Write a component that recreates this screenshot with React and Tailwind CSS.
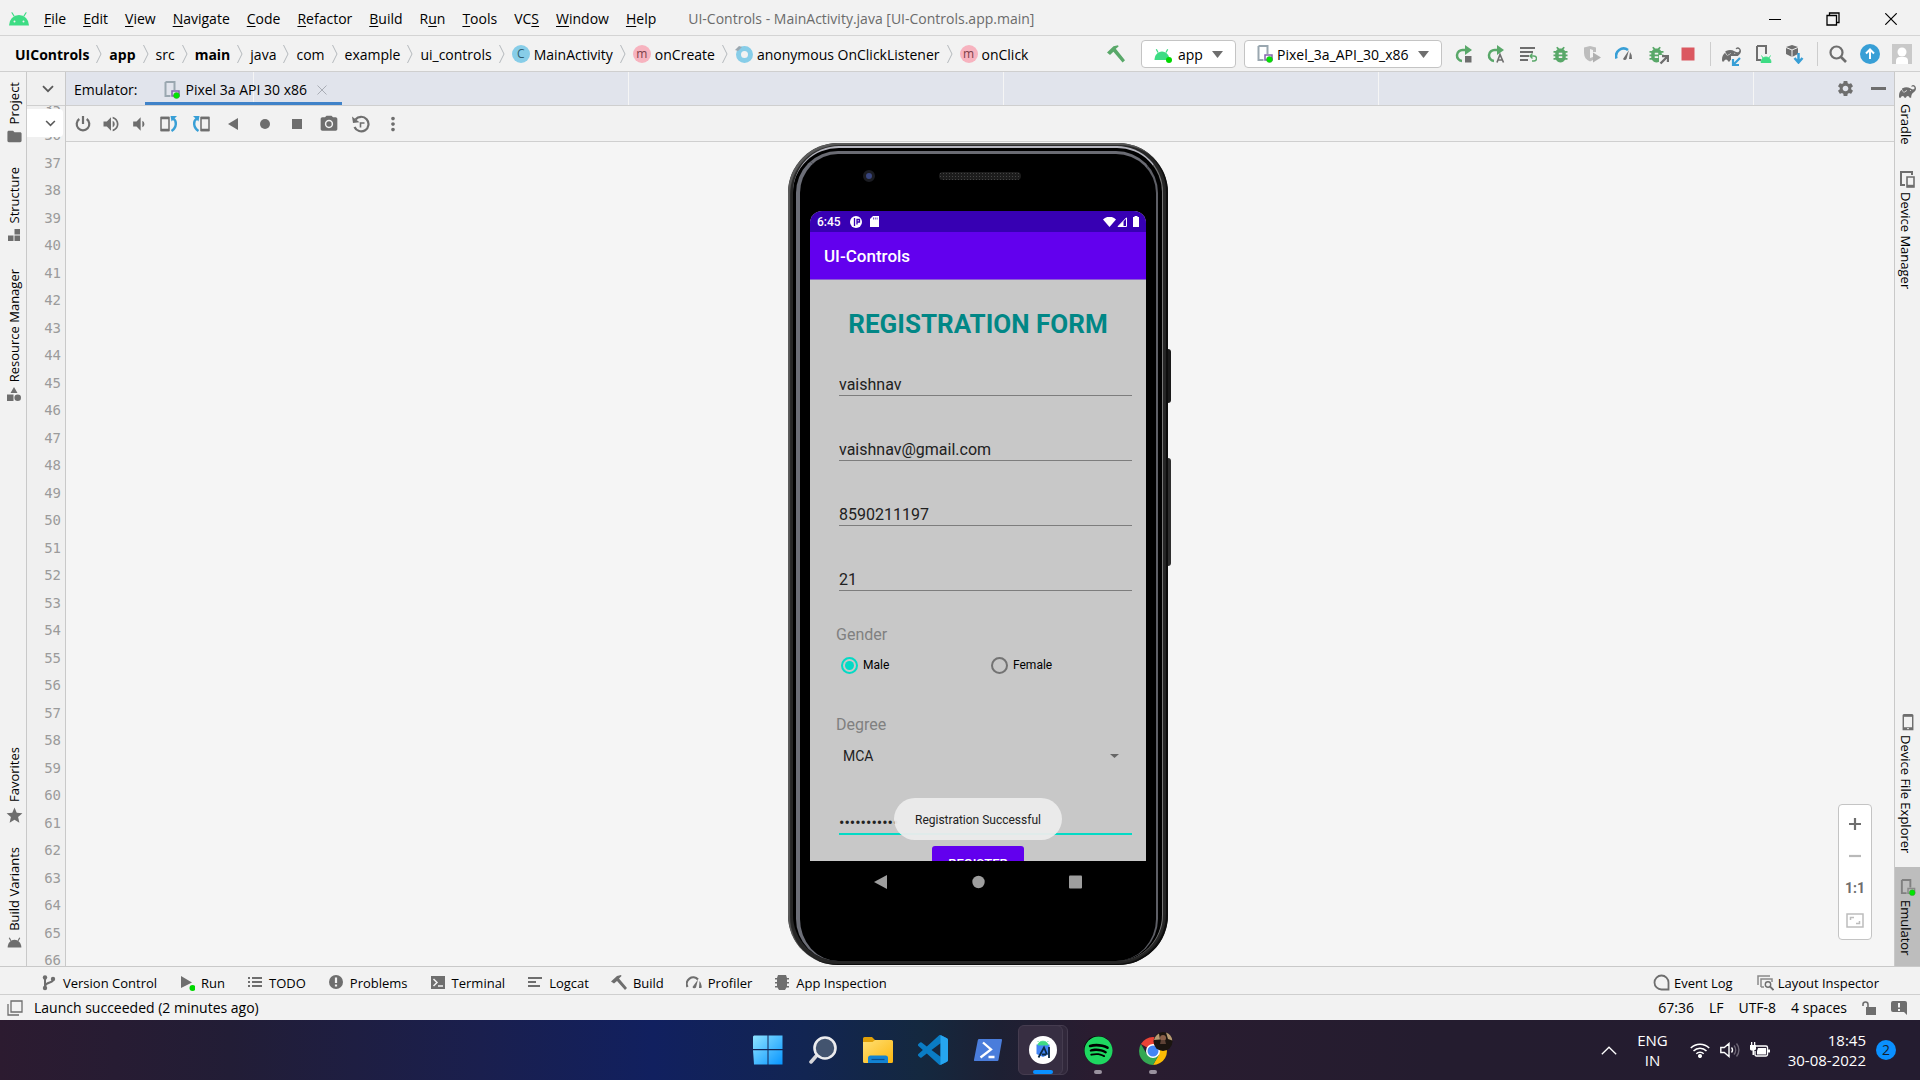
import React from "react";
import {
  MdVolumeUp,
  MdVolumeDown,
  MdCameraAlt,
  MdMoreVert,
  MdSettings,
  MdBugReport,
  MdFolder,
  MdStar,
} from "react-icons/md";
import { SiGradle } from "react-icons/si";
import { FaSpotify } from "react-icons/fa";

/* ---------- shared icons ---------- */

function AndroidHead({ className }) {
  return (
    <svg viewBox="0 0 20 14" className={className} aria-hidden="true">
      <path d="M5 4 3 .8M15 4l2-3.200" stroke="currentColor" strokeWidth="1.200" strokeLinecap="round" />
      <path d="M0 13.500a10 10.500 0 0 1 20 0z" fill="currentColor" />
      <circle cx="5.500" cy="9.500" r="1" fill="#f2f2f2" />
      <circle cx="14.500" cy="9.500" r="1" fill="#f2f2f2" />
    </svg>
  );
}

function AndroidSolid({ className }) {
  return (
    <svg viewBox="0 0 16 12" className={className} aria-hidden="true">
      <path d="M4 4 2.300.8M12 4 13.700.8" stroke="currentColor" strokeWidth="1.300" />
      <path d="M.5 11.500C.5 6.500 4 3 8 3s7.500 3.500 7.500 8.500z" fill="currentColor" />
    </svg>
  );
}

function Hammer({ className }) {
  return (
    <svg viewBox="0 0 18 18" className={className} aria-hidden="true">
      <path d="M0 7.500 6.500 1.200 11 .2l.6 1.200-2.800 2.400L18 15.200 15.600 17.600 6.400 6.800 3 10z" fill="currentColor" />
    </svg>
  );
}

function PhoneRunning({ className, chip = "#8464ad", body = "#9aa7b0" }) {
  return (
    <svg viewBox="0 0 16 18" className={className} aria-hidden="true">
      <path d="M1.500 1h9v8M1.500 1v14h5" fill="none" stroke={body} strokeWidth="2" />
      <path d="M8 10h7v5H8z" fill="none" stroke={chip} strokeWidth="1.500" />
      <circle cx="12.500" cy="14.500" r="3" fill="#00e600" stroke="#3a9a3a" strokeWidth=".5" />
    </svg>
  );
}

function PlainPhone({ className }) {
  return (
    <svg viewBox="0 0 12 18" className={className} aria-hidden="true">
      <path d="M1 1.500h10v15H1z" fill="none" stroke="currentColor" strokeWidth="1.500" />
      <path d="M1 1.500h10M1 15.500h10" stroke="currentColor" strokeWidth="3" />
      <path d="M5 15.500h2" stroke="#f2f2f2" strokeWidth="1" />
    </svg>
  );
}

function Caret({ className }) {
  return (
    <svg viewBox="0 0 10 7" preserveAspectRatio="none" className={className} aria-hidden="true">
      <path d="M0 0h10L5 7z" fill="currentColor" />
    </svg>
  );
}

function ChevronDown({ className }) {
  return (
    <svg viewBox="0 0 12 8" className={className} aria-hidden="true">
      <path d="m1 1.200 5 5 5-5" fill="none" stroke="currentColor" strokeWidth="1.800" />
    </svg>
  );
}

/* ---------- title bar ---------- */

const MENUS = [
  ["", "F", "ile"],
  ["", "E", "dit"],
  ["", "V", "iew"],
  ["", "N", "avigate"],
  ["", "C", "ode"],
  ["", "R", "efactor"],
  ["", "B", "uild"],
  ["R", "u", "n"],
  ["", "T", "ools"],
  ["VC", "S", ""],
  ["", "W", "indow"],
  ["", "H", "elp"],
];

function TitleBar() {
  return (
    <header className="flex h-9 shrink-0 items-center border-b border-[#d4d4d4] pl-[9px] pt-0.5">
      <AndroidHead className="mr-[15px] h-[14px] w-5 text-[#3ddc84]" />
      <nav aria-label="Main menu" className="flex gap-[17px]">
        {MENUS.map(([pre, key, post]) => (
          <button key={pre + key + post} type="button" className="leading-5">
            {pre}
            <span className="underline underline-offset-2">{key}</span>
            {post}
          </button>
        ))}
      </nav>
      <h1 className="ml-8 text-[#6b6b6b]">UI-Controls - MainActivity.java [UI-Controls.app.main]</h1>
      <div className="ml-auto flex *:grid *:h-8 *:w-[58px] *:place-items-center">
        <button type="button" aria-label="Minimize">
          <svg viewBox="0 0 12 12" className="size-3"><path d="M0 6.500h12" stroke="#000" /></svg>
        </button>
        <button type="button" aria-label="Restore">
          <svg viewBox="0 0 14 14" className="size-[14px]">
            <path d="M1 3.500h9.500V13H1zM3.500 3.500V1H13v9.500h-2.500" fill="none" stroke="#000" strokeWidth="1.300" />
          </svg>
        </button>
        <button type="button" aria-label="Close">
          <svg viewBox="0 0 12 12" className="size-3"><path d="m.3.3 11.400 11.400M11.700.3.3 11.700" stroke="#000" strokeWidth="1.200" /></svg>
        </button>
      </div>
    </header>
  );
}

/* ---------- navigation bar ---------- */

const CRUMBS = [
  { text: "UIControls", bold: true },
  { text: "app", bold: true },
  { text: "src" },
  { text: "main", bold: true },
  { text: "java" },
  { text: "com" },
  { text: "example" },
  { text: "ui_controls" },
  { text: "MainActivity", badge: "C" },
  { text: "onCreate", badge: "m" },
  { text: "anonymous OnClickListener", badge: "anon" },
  { text: "onClick", badge: "m" },
];

function Badge({ kind }) {
  if (kind === "anon") {
    return (
      <svg viewBox="0 0 18 18" className="mr-1 size-[18px]" aria-hidden="true">
        <circle cx="9.500" cy="9.500" r="6" fill="none" stroke="#87cde8" strokeWidth="5" />
        <path d="M0 5 4 1l3 1-4 4z" fill="#9aa7b0" />
      </svg>
    );
  }
  const tone = kind === "C" ? "bg-[#87cde8] text-[#2f5c70]" : "bg-[#f7b3bf] text-[#7c4049]";
  return (
    <span aria-hidden="true" className={`mr-1 grid size-[18px] place-items-center rounded-full text-xs leading-none ${tone}`}>
      {kind}
    </span>
  );
}

function RunCombo({ label, icon, value }) {
  return (
    <div className="flex h-7 items-center rounded border border-[#c4c4c4] bg-white px-3">
      {icon}
      <select aria-label={label} className="appearance-none bg-transparent pt-px text-black outline-none" defaultValue={value}>
        <option>{value}</option>
      </select>
      <Caret className="ml-[9px] h-[7px] w-[11px] text-[#6e6e6e]" />
    </div>
  );
}

const ACTIONS = [
  {
    name: "Apply Changes and Restart Activity",
    art: (
      <>
        <path d="M11 5H8a5.500 5.500 0 0 0-1 11" fill="none" stroke="#59a869" strokeWidth="2.500" />
        <path d="m10 0 7 5-7 5z" fill="#59a869" />
        <path d="M10 11h6.500v6.500H10z" fill="#6e6e6e" />
      </>
    ),
  },
  {
    name: "Apply Code Changes",
    art: (
      <>
        <path d="M11 5H8a5.500 5.500 0 0 0-1 11" fill="none" stroke="#59a869" strokeWidth="2.500" />
        <path d="m10 0 7 5-7 5z" fill="#59a869" />
        <path d="m10 17.500 3-8 3.500 8M11 15h4.500" fill="none" stroke="#6e6e6e" strokeWidth="1.600" />
      </>
    ),
  },
  {
    name: "Run Configurations",
    art: (
      <>
        <path d="M1 3h15M1 7h13M1 11h9M1 15h8" stroke="#6e6e6e" strokeWidth="2.200" />
        <path d="M11 11h4a2.500 2.500 0 0 1 0 5h-2M13.500 8.500 11 11l2.500 2.500" fill="none" stroke="#59a869" strokeWidth="1.400" />
      </>
    ),
  },
  { name: "Debug", node: <MdBugReport className="size-[21px] text-[#59a869]" /> },
  {
    name: "Run with Coverage",
    art: (
      <>
        <path d="M1 2.500 7 1l6 1.500V7h-3V5L7 4v9l3-1v3l-3 1.500C3 15 1 12 1 8z" fill="#bdbdbd" />
        <path d="m10 7.500 8 5-8 5z" fill="#b0b0b0" />
      </>
    ),
  },
  {
    name: "Profile",
    art: (
      <>
        <path d="M1.500 13.500A7.500 7.500 0 0 1 13 5" fill="none" stroke="#389fd6" strokeWidth="2.600" />
        <path d="M8 14 14 5l-2.500 9a2 2 0 0 1-3.500 0zM15 7a9 9 0 0 1 2 7h-3z" fill="#6e6e6e" />
      </>
    ),
  },
  {
    name: "Attach Debugger",
    node: (
      <span className="relative grid place-items-center">
        <MdBugReport className="size-[21px] text-[#59a869]" />
        <svg viewBox="0 0 10 10" className="absolute -right-0.5 bottom-0 size-[10px] bg-[#f2f2f2]">
          <path d="M3 1h6v6M9 1 1.500 8.500" fill="none" stroke="#6e6e6e" strokeWidth="2.400" />
        </svg>
      </span>
    ),
  },
  { name: "Stop", art: <path d="M2.500 2.500h13v13h-13z" fill="#db5860" /> },
];

function ToolButton({ name, children }) {
  return (
    <button type="button" aria-label={name} className="grid h-7 w-8 place-items-center">
      {children}
    </button>
  );
}

function NavBar() {
  return (
    <div className="flex h-9 shrink-0 items-center border-b border-[#cfcfcf] pl-[15px] pr-0.5 pt-px">
      <ol className="flex items-center">
        {CRUMBS.map(({ text, bold, badge }, i) => (
          <li key={text} className="flex items-center">
            {i > 0 && (
              <svg viewBox="0 0 6 20" className="mx-[7px] h-5 w-[6px]" aria-hidden="true">
                <path d="m.5 1 4.500 9-4.500 9" fill="none" stroke="#b4b9bd" />
              </svg>
            )}
            {badge && <Badge kind={badge} />}
            <span className={bold ? "pt-px font-bold" : "pt-px"}>{text}</span>
          </li>
        ))}
      </ol>
      <div className="ml-auto flex items-center">
        <button type="button" aria-label="Make Project" className="mr-4">
          <Hammer className="size-[18px] text-[#59a869]" />
        </button>
        <RunCombo
          label="Run configuration"
          value="app"
          icon={
            <span className="relative mr-2">
              <AndroidSolid className="h-[13px] w-4 text-[#3ddc84]" />
              <i className="absolute -bottom-0.5 -right-0.5 size-[6px] rounded-full bg-[#00d800]" />
            </span>
          }
        />
        <span className="w-2" />
        <RunCombo
          label="Target device"
          value="Pixel_3a_API_30_x86"
          icon={<PhoneRunning className="mr-1 h-[18px] w-4" />}
        />
        <div className="ml-[6px] flex">
          {ACTIONS.map(({ name, art, node }) => (
            <ToolButton key={name} name={name}>
              {node || <svg viewBox="0 0 18 18" className="size-[18px]">{art}</svg>}
            </ToolButton>
          ))}
        </div>
        <i className="ml-[6px] mr-1 h-6 w-px bg-[#cdcdcd]" />
        <ToolButton name="Sync Project with Gradle Files">
          <span className="relative">
            <SiGradle className="size-[19px] text-[#6e6e6e]" />
            <svg viewBox="0 0 10 10" className="absolute -bottom-0.5 right-0 size-[10px] bg-[#f2f2f2]">
              <path d="M2 3v6h6M2 9l7-7" fill="none" stroke="#389fd6" strokeWidth="2.200" />
            </svg>
          </span>
        </ToolButton>
        <ToolButton name="Device Manager">
          <svg viewBox="0 0 18 18" className="size-[18px]">
            <path d="M3 1h9v8M3 1v14h4" fill="none" stroke="#6e6e6e" strokeWidth="2" />
            <path d="M7 17.500a5 5.500 0 0 1 10 0zM9 13l-1.500-2.500M15 13l1.500-2.500" fill="#3ddc84" stroke="#3ddc84" />
          </svg>
        </ToolButton>
        <ToolButton name="SDK Manager">
          <svg viewBox="0 0 20 20" className="size-5">
            <path d="m7 1 6 2v7l-6 3-6-3V3z" fill="#6e6e6e" />
            <path d="m1 3.500 6 2.500 6-2.500M7 6v7" fill="none" stroke="#f2f2f2" />
            <path d="M13.500 9v8M9.500 14l4 4.500 4-4.500" fill="none" stroke="#389fd6" strokeWidth="2.500" />
          </svg>
        </ToolButton>
        <i className="ml-[6px] mr-1 h-6 w-px bg-[#cdcdcd]" />
        <ToolButton name="Search Everywhere">
          <svg viewBox="0 0 18 18" className="size-[18px]">
            <circle cx="7.500" cy="7.500" r="6" fill="none" stroke="#6e6e6e" strokeWidth="2.200" />
            <path d="m12 12 5 5" stroke="#6e6e6e" strokeWidth="2.600" />
          </svg>
        </ToolButton>
        <ToolButton name="Update">
          <svg viewBox="0 0 20 20" className="size-5">
            <circle cx="10" cy="10" r="10" fill="#389fd6" />
            <path d="M10 15V6M6 9.500l4-4 4 4" fill="none" stroke="#fff" strokeWidth="2" />
          </svg>
        </ToolButton>
        <ToolButton name="Account">
          <svg viewBox="0 0 20 20" className="size-5">
            <path d="M0 0h20v20H0z" fill="#c9c9c9" />
            <circle cx="10" cy="8" r="4.500" fill="#fff" />
            <path d="M4 20v-3a4 4 0 0 1 4-4h4a4 4 0 0 1 4 4v3z" fill="#fff" />
          </svg>
        </ToolButton>
      </div>
    </div>
  );
}

/* ---------- side stripes ---------- */

function LeftTab({ text, children }) {
  return (
    <button type="button" className="flex flex-col items-center gap-1 text-[13px] leading-[18px]">
      <span className="rotate-180 [writing-mode:vertical-rl]">{text}</span>
      <span className="grid h-[15px] place-items-center text-[#6e6e6e]">{children}</span>
    </button>
  );
}

function RightTab({ text, children }) {
  return (
    <button type="button" className="flex flex-col items-center gap-1 text-[13px] leading-[18px]">
      <span className="grid h-[17px] place-items-center text-[#6e6e6e]">{children}</span>
      <span className="pr-1 [writing-mode:vertical-rl]">{text}</span>
    </button>
  );
}

function LeftStripe() {
  return (
    <aside className="flex w-[27px] shrink-0 flex-col items-center border-r border-[#c9c9c9] pb-4 pl-0.5 pt-[10px]">
      <LeftTab text="Project"><MdFolder className="size-[17px]" /></LeftTab>
      <div className="mt-6">
        <LeftTab text="Structure">
          <svg viewBox="0 0 12 12" className="size-3"><path d="M6.500 0H12v5.500H6.500zM0 6.500h5.500V12H0zM6.500 6.500H12V12H6.500z" fill="currentColor" /></svg>
        </LeftTab>
      </div>
      <div className="mt-[26px]">
        <LeftTab text="Resource Manager">
          <svg viewBox="0 0 14 14" className="size-[14px]">
            <path d="m7 0 3.500 6h-7zM0 7.500h6.500V14H0z" fill="currentColor" />
            <circle cx="10.700" cy="10.700" r="3.300" fill="currentColor" />
          </svg>
        </LeftTab>
      </div>
      <div className="mt-auto">
        <LeftTab text="Favorites"><MdStar className="size-[19px]" /></LeftTab>
      </div>
      <div className="mt-[26px]">
        <LeftTab text="Build Variants"><AndroidSolid className="h-[11px] w-[15px]" /></LeftTab>
      </div>
    </aside>
  );
}

function RightStripe() {
  return (
    <aside className="flex w-[26px] shrink-0 flex-col items-center border-l border-[#c9c9c9] pt-[11px]">
      <RightTab text="Gradle"><SiGradle className="size-[17px]" /></RightTab>
      <div className="mt-[26px]">
        <RightTab text="Device Manager">
          <svg viewBox="0 0 15 17" className="h-[17px] w-[15px]">
            <path d="M12 4V1H1v13h4" fill="none" stroke="currentColor" strokeWidth="2" />
            <path d="M7 6h7v10H7z" fill="#f2f2f2" stroke="currentColor" strokeWidth="1.600" />
            <path d="M7 15h7" stroke="currentColor" strokeWidth="2.400" />
          </svg>
        </RightTab>
      </div>
      <div className="mt-auto">
        <RightTab text="Device File Explorer"><PlainPhone className="h-[17px] w-3" /></RightTab>
      </div>
      <div className="mt-[14px] flex w-full justify-center bg-[#bdbdbd] pb-[10px] pt-3">
        <RightTab text="Emulator"><PhoneRunning className="h-[17px] w-4" body="#808080" chip="#8a8a8a" /></RightTab>
      </div>
    </aside>
  );
}

/* ---------- editor gutter ---------- */

const LINES = Array.from({ length: 32 }, (_, i) => 35 + i);

function Gutter() {
  return (
    <div className="flex w-[39px] shrink-0 flex-col border-r border-[#c9c9c9] bg-[#f0f0f0]">
      <div className="flex h-[34px] shrink-0 items-center border-b border-[#cfcfcf] pl-[15px]">
        <ChevronDown className="h-2 w-3 text-[#5a5a5a]" />
      </div>
      <div className="relative min-h-0 flex-1 overflow-hidden">
        <ol className="-mt-3 pr-1 text-right font-['DejaVu_Sans_Mono',monospace] text-sm text-[#9b9b9b]">
          {LINES.map((n) => (
            <li key={n} className="odd:leading-[28px] even:leading-[27px]">{n}</li>
          ))}
        </ol>
        <button type="button" aria-label="Previous highlighted error" className="absolute left-0 top-[3px] grid h-7 w-9 place-items-center rounded-r bg-white pl-[10px]">
          <ChevronDown className="h-[7px] w-[11px] text-[#5a5a5a]" />
        </button>
      </div>
    </div>
  );
}

/* ---------- emulator panel ---------- */

function RotatePhone({ flip }) {
  return (
    <svg viewBox="0 0 18 18" className={flip ? "size-[18px] -scale-x-100" : "size-[18px]"}>
      <path d="M1 2.500h8v13H1z" fill="none" stroke="#6e6e6e" strokeWidth="1.500" />
      <path d="M1 3h8M1 15h8" stroke="#6e6e6e" strokeWidth="2.400" />
      <path d="M13 3.500c4 2 4 9-1.500 12.500" fill="none" stroke="#389fd6" strokeWidth="2.400" />
      <path d="M10.500 1h6.500l-5.500 5.500z" fill="#389fd6" />
    </svg>
  );
}

function EmulatorToolbar() {
  return (
    <div className="flex h-9 shrink-0 items-center border-b border-[#cfcfcf] pl-[3px] text-[#6e6e6e]">
      <div className="flex *:grid *:h-7 *:w-7 *:place-items-center">
        <button type="button" aria-label="Power">
          <svg viewBox="0 0 16 16" className="size-4">
            <path d="M4.300 3a6.300 6.300 0 1 0 7.400 0M8 0v8" fill="none" stroke="currentColor" strokeWidth="2.200" />
          </svg>
        </button>
        <button type="button" aria-label="Volume up"><MdVolumeUp className="size-5" /></button>
        <button type="button" aria-label="Volume down"><MdVolumeDown className="size-5" /></button>
      </div>
      <div className="flex *:grid *:h-7 *:w-8 *:place-items-center">
        <button type="button" aria-label="Rotate left"><RotatePhone /></button>
        <button type="button" aria-label="Rotate right"><RotatePhone flip /></button>
        <button type="button" aria-label="Back">
          <svg viewBox="0 0 10 12" className="h-3 w-[10px]"><path d="M10 0v12L0 6z" fill="currentColor" /></svg>
        </button>
        <button type="button" aria-label="Home"><i className="size-[10px] rounded-full bg-[#6e6e6e]" /></button>
        <button type="button" aria-label="Overview"><i className="size-[10px] bg-[#6e6e6e]" /></button>
        <button type="button" aria-label="Take screenshot"><MdCameraAlt className="size-5" /></button>
        <button type="button" aria-label="Snapshots">
          <svg viewBox="0 0 18 18" className="size-[18px]">
            <path d="M3.500 4.500A7.300 7.300 0 1 1 2.500 12" fill="none" stroke="currentColor" strokeWidth="2.200" />
            <path d="M0 1.500 1 8l6.500-.8z" fill="currentColor" />
            <path d="M8.500 12.500V8h4" fill="none" stroke="currentColor" strokeWidth="1.600" />
          </svg>
        </button>
        <button type="button" aria-label="Extended controls"><MdMoreVert className="size-[22px]" /></button>
      </div>
    </div>
  );
}

function EmulatorHeader() {
  return (
    <div className="flex h-[34px] shrink-0 items-stretch border-b border-[#cfcfcf] bg-[#e1e4ec] bg-[linear-gradient(to_right,#f5f5f5_1px,transparent_1px)] bg-[length:375px_100%] bg-[position:187px_0] pl-2">
      <span className="self-center pt-0.5">Emulator:</span>
      <div className="ml-2 flex w-[197px] items-center border-b-[3px] border-[#4083c9] pl-[19px] pt-[5px]">
        <PhoneRunning className="mr-[5px] h-[18px] w-4" />
        <button type="button">Pixel 3a API 30 x86</button>
        <button type="button" aria-label="Close tab" className="ml-[10px]">
          <svg viewBox="0 0 10 10" className="size-[10px]"><path d="m.5.5 9 9M9.500.5l-9 9" stroke="#a9adb5" /></svg>
        </button>
      </div>
      <button type="button" aria-label="Settings" className="ml-auto w-[34px]">
        <MdSettings className="mx-auto size-[19px] text-[#6e6e6e]" />
      </button>
      <button type="button" aria-label="Hide" className="grid w-[32px] place-items-center">
        <i className="h-[3px] w-[15px] bg-[#6e6e6e]" />
      </button>
    </div>
  );
}

const FIELDS = [
  ["Name", "vaishnav", "text"],
  ["Email", "vaishnav@gmail.com", "email"],
  ["Phone", "8590211197", "tel"],
  ["Age", "21", "text"],
];

function Radio({ label, checked }) {
  return (
    <label className="flex w-[150px] shrink-0 items-center gap-[5px] text-xs text-black">
      <input
        type="radio"
        name="gender"
        defaultChecked={checked}
        className="grid size-[17px] appearance-none place-items-center rounded-full border-2 border-[#737373] before:size-[9px] before:rounded-full checked:border-[#03dac5] checked:before:bg-[#03dac5]"
      />
      {label}
    </label>
  );
}

function PhoneScreen() {
  return (
    <div className="relative flex min-h-0 flex-1 flex-col overflow-hidden rounded-t-xl bg-[#c8c8c8] font-['Roboto',sans-serif] text-[#212121]">
      <div className="flex h-[21px] shrink-0 items-center bg-[#3700b3] px-[7px] text-xs text-white">
        <span className="font-medium">6:45</span>
        <svg viewBox="0 0 12 12" className="ml-[9px] size-3">
          <circle cx="6" cy="6" r="6" fill="#fff" />
          <path d="M4.500 2v8M7 8.500V3.500h2.500v2.500H7" fill="none" stroke="#3700b3" strokeWidth="1.300" />
        </svg>
        <svg viewBox="0 0 9 11" className="ml-2 h-[11px] w-[9px]">
          <path d="M3 0h6v11H0V3z" fill="#fff" />
          <path d="M3.500 1.500v2M5.300 1.500v2M7.100 1.500v2" stroke="#3700b3" strokeWidth=".7" />
        </svg>
        <svg viewBox="0 0 13 10" className="ml-auto h-[10px] w-[13px]"><path d="M0 2.500a9 9 0 0 1 13 0L6.500 10z" fill="#fff" /></svg>
        <svg viewBox="0 0 10 10" className="ml-px size-[10px]">
          <path d="M9.500.8V9.500H1z" fill="none" stroke="#fff" />
          <path d="M6.500 4v5.500H1z" fill="#fff" />
        </svg>
        <svg viewBox="0 0 6 11" className="ml-[6px] h-[11px] w-[6px]"><path d="M1.500 0h3v1H6v10H0V1h1.500z" fill="#fff" /></svg>
      </div>
      <div className="flex h-12 shrink-0 items-center border-b border-[#8c5fd0] bg-[#6200ee] px-[14px] pt-0.5 text-[17px] font-medium text-white">
        UI-Controls
      </div>
      <form className="flex flex-col pl-[29px] pr-[14px]" onSubmit={(e) => e.preventDefault()}>
        <h2 className="-ml-[15px] mt-[29px] text-center text-[26px] font-bold leading-[30px] text-[#018786]">REGISTRATION FORM</h2>
        <div className="mt-[33px] flex flex-col gap-[41px]">
          {FIELDS.map(([label, value, type]) => (
            <input
              key={label}
              type={type}
              aria-label={label}
              defaultValue={value}
              className="h-6 w-full border-b border-[#7d7d7d] bg-transparent pt-0.5 text-base outline-none"
            />
          ))}
        </div>
        <p className="-ml-[3px] mt-[34px] text-base leading-5 text-[#808080]">Gender</p>
        <div className="mt-[10px] flex h-5 items-center pl-[2px]">
          <Radio label="Male" checked />
          <Radio label="Female" />
        </div>
        <label htmlFor="degree" className="-ml-[3px] mt-10 text-base leading-5 text-[#808080]">Degree</label>
        <div className="mt-[11px] flex h-5 items-center pl-1 pr-[13px]">
          <select id="degree" className="flex-1 appearance-none bg-transparent text-sm outline-none" defaultValue="MCA">
            <option>MCA</option>
          </select>
          <Caret className="h-1 w-[9px] shrink-0 text-[#666]" />
        </div>
        <input
          type="password"
          aria-label="Password"
          defaultValue="abcdefghijk"
          className="mt-[43px] h-[26px] w-full border-b-2 border-[#03dac5] bg-transparent pt-0.5 text-base outline-none"
        />
        <button type="submit" className="-ml-[15px] mt-[11px] h-9 w-[92px] self-center rounded-[3px] bg-[#6200ee] text-[13px] font-medium text-white">
          REGISTER
        </button>
      </form>
      <div role="status" className="absolute bottom-[21px] left-1/2 grid h-[42px] w-[168px] -translate-x-1/2 place-items-center rounded-full bg-[#ececec]/95 pt-0.5 text-xs">
        Registration Successful
      </div>
    </div>
  );
}

function Phone() {
  return (
    <div className="relative my-px flex w-[380px] flex-col rounded-[50px] bg-[#262626] shadow-[inset_2px_2px_1px_#5c5c5c,inset_-2px_-1px_1px_#0c0c0c]">
      <i className="absolute -right-[3px] top-[206px] h-[54px] w-[3px] rounded-r-sm bg-[#191919]" />
      <i className="absolute -right-[3px] top-[315px] h-[108px] w-[3px] rounded-r-sm bg-[#2e2e2e]" />
      <div className="mb-[4px] ml-[5px] mr-[5px] mt-[3px] flex min-h-0 flex-1 flex-col rounded-[46px] border-t-2 border-r border-t-[#b5b5be] border-r-[#777] bg-black">
        <div className="ml-[3px] mr-[4px] mt-[3px] flex min-h-0 flex-1 flex-col rounded-[42px] border-l-[4px] border-r-2 border-t-[3px] border-l-[#6c6e77] border-r-[#5e5f66] border-t-[#6a6b73] bg-black px-[10px]">
          <div className="flex h-[57px] shrink-0 items-center pb-[14px] pl-[53px]">
            <i className="size-3 rounded-full border-[3px] border-[#1b1c22] bg-[#38457e]" />
            <i className="ml-16 h-2 w-[82px] rounded-full bg-[#1c1c1c] bg-[radial-gradient(#454545_1px,transparent_1px)] bg-[length:3px_3px]" />
          </div>
          <PhoneScreen />
          <div className="flex h-[100px] shrink-0 items-start justify-between px-[64px] pt-[14px] *:text-[#9e9e9e]">
            <button type="button" aria-label="Back"><svg viewBox="0 0 13 14" className="h-[14px] w-[13px]"><path d="M13 0v14L0 7z" fill="currentColor" /></svg></button>
            <button type="button" aria-label="Home"><svg viewBox="0 0 13 14" className="h-[14px] w-[13px]"><circle cx="6.500" cy="7" r="6.200" fill="currentColor" /></svg></button>
            <button type="button" aria-label="Overview"><svg viewBox="0 0 13 14" className="h-[14px] w-[13px]"><rect y=".5" width="13" height="13" rx="1" fill="currentColor" /></svg></button>
          </div>
        </div>
      </div>
    </div>
  );
}

function ZoomControls() {
  return (
    <div className="absolute bottom-[26px] right-[22px] flex w-[34px] flex-col rounded border border-[#c4c4c4] bg-white py-[3px] *:grid *:h-8 *:place-items-center">
      <button type="button" aria-label="Zoom in">
        <svg viewBox="0 0 12 12" className="size-3"><path d="M6 0v12M0 6h12" stroke="#6e6e6e" strokeWidth="2.200" /></svg>
      </button>
      <button type="button" aria-label="Zoom out">
        <svg viewBox="0 0 12 12" className="size-3"><path d="M0 6h12" stroke="#b9b9b9" strokeWidth="2.200" /></svg>
      </button>
      <button type="button" className="font-['Roboto',sans-serif] text-sm font-bold text-[#6e6e6e]">1:1</button>
      <button type="button" aria-label="Zoom to fit">
        <svg viewBox="0 0 18 15" className="h-[15px] w-[18px]">
          <path d="M1 1h16v13H1zM4.500 7V4.500H8M13.500 8v2.500H10" fill="none" stroke="#bdbdbd" strokeWidth="1.500" />
        </svg>
      </button>
    </div>
  );
}

function EmulatorPanel() {
  return (
    <main className="flex min-w-0 flex-1 flex-col">
      <EmulatorHeader />
      <EmulatorToolbar />
      <div className="relative flex min-h-0 flex-1 justify-center bg-[#f5f5f5] pr-1">
        <Phone />
        <ZoomControls />
      </div>
    </main>
  );
}

/* ---------- bottom bars ---------- */

const TOOL_WINDOWS = [
  ["Version Control", <path key="p" d="M4 3v11M12 4v1c0 3-7 2-8 6" fill="none" stroke="currentColor" strokeWidth="2" />, "vcs"],
  ["Run", <g key="p"><path d="M2 1l11 6.500L2 13z" fill="currentColor" /><circle cx="13.500" cy="13" r="3" fill="#00d800" /></g>],
  ["TODO", <path key="p" d="M1 3h2M5 3h10M1 7h2M5 7h10M1 11h2M5 11h10" stroke="currentColor" strokeWidth="2" />],
  ["Problems", <g key="p"><circle cx="8" cy="7" r="7" fill="currentColor" /><path d="M8 2.500v5.500M8 9.500v2" stroke="#f2f2f2" strokeWidth="2.200" /></g>],
  ["Terminal", <g key="p"><path d="M1 1h14v13H1z" fill="currentColor" /><path d="m3.500 4 3.500 3.500L3.500 11M8 11h5" fill="none" stroke="#f2f2f2" strokeWidth="1.500" /></g>],
  ["Logcat", <path key="p" d="M1 3h14M1 7h8M1 11h12" stroke="currentColor" strokeWidth="2" />],
  ["Build", <path key="p" d="M0 6.500 6 1 10 0l.5 1L8 3.500l8 9.500-2 2L6 6 3 8.500z" fill="currentColor" />],
  ["Profiler", <g key="p"><path d="M1.500 12A6.500 6.500 0 0 1 12 4.500" fill="none" stroke="currentColor" strokeWidth="2.200" /><path d="M6.500 12 12 4.500 10 12.500a2 2 0 0 1-3.500-.5zM13.500 6a8 8 0 0 1 2 7H13z" fill="currentColor" /></g>],
  ["App Inspection", <path key="p" d="M4 0h8l1 3h2v1.500h-2V7h2v1.500h-2V11h2v1.500h-2.500L11 15H5l-1.500-2.500H1V11h2V8.500H1V7h2V4.500H1V3h2z" fill="currentColor" />],
];

function ToolWindowBar() {
  return (
    <div className="flex h-7 shrink-0 items-center border-b border-[#cfcfcf] pl-[41px] pr-[41px] text-[13px]">
      <div className="flex gap-[22px]">
        {TOOL_WINDOWS.map(([name, art, kind]) => (
          <button key={name} type="button" className="flex items-center gap-[6px] pt-1 leading-[18px]">
            <svg viewBox="0 0 16 16" className="size-4 text-[#6e6e6e]" aria-hidden="true">
              {art}
              {kind === "vcs" && (
                <g fill="currentColor"><circle cx="4" cy="2.500" r="2.200" /><circle cx="4" cy="13" r="2.200" /><circle cx="12" cy="4" r="2.200" /></g>
              )}
            </svg>
            {name}
          </button>
        ))}
      </div>
      <div className="ml-auto flex gap-6">
        <button type="button" className="flex items-center gap-1 pt-1 leading-[18px]">
          <svg viewBox="0 0 17 17" className="size-[17px]" aria-hidden="true">
            <path d="M15.500 15.500H8.500A7 7 0 1 1 15.500 8.500z" fill="none" stroke="#6e6e6e" strokeWidth="1.800" />
          </svg>
          Event Log
        </button>
        <button type="button" className="flex items-center gap-1 pt-1 leading-[18px]">
          <svg viewBox="0 0 17 16" className="h-4 w-[17px]" aria-hidden="true">
            <path d="M1 10V1h12M4 12V4h11v3M4 12h3" fill="none" stroke="#8a8a8a" strokeWidth="1.500" />
            <circle cx="11" cy="9.500" r="2.700" fill="none" stroke="#6e6e6e" strokeWidth="1.400" />
            <path d="m13 11.500 3.500 3.500" stroke="#6e6e6e" strokeWidth="1.800" />
          </svg>
          Layout Inspector
        </button>
      </div>
    </div>
  );
}

function StatusBar() {
  return (
    <footer className="flex h-[25px] shrink-0 items-center pl-[7px] pr-[13px]">
      <svg viewBox="0 0 16 16" className="mr-[11px] size-4" aria-hidden="true">
        <path d="M4 1h11v11H4zM1 4v11h11" fill="none" stroke="#6e6e6e" strokeWidth="1.300" />
      </svg>
      <span>Launch succeeded (2 minutes ago)</span>
      <div className="ml-auto flex items-center gap-[15px]">
        <span>67:36</span>
        <span>LF</span>
        <span>UTF-8</span>
        <span>4 spaces</span>
        <svg viewBox="0 0 14 14" className="h-[14px] w-[14px]" aria-hidden="true">
          <path d="M4 6h10v8H4z" fill="#6e6e6e" />
          <path d="M1 5V3.500a2.500 2.500 0 0 1 5 0V7" fill="none" stroke="#6e6e6e" strokeWidth="1.600" />
        </svg>
        <svg viewBox="0 0 16 14" className="h-[14px] w-4" aria-hidden="true">
          <path d="M2 0h12a2 2 0 0 1 2 2v12l-3-3H2a2 2 0 0 1-2-2V2a2 2 0 0 1 2-2z" fill="#6e6e6e" />
          <path d="M8 2v4.500M8 8v2" stroke="#f2f2f2" strokeWidth="2" />
        </svg>
      </div>
    </footer>
  );
}

/* ---------- taskbar ---------- */

function TaskButton({ name, children, state }) {
  return (
    <button type="button" aria-label={name} className="relative grid h-[50px] w-[55px] place-items-center">
      {state === "active" && (
        <>
          <i className="absolute inset-y-0 right-0.5 w-4 rounded-md border border-[#453c4f] bg-[#31283b]" />
          <i className="absolute inset-y-0 left-[3px] w-[45px] rounded-md border border-[#453c4f] bg-[#372e42]" />
          <i className="absolute bottom-px left-[18px] h-1 w-5 rounded-full bg-[#0a90ff]" />
        </>
      )}
      {state === "open" && <i className="absolute bottom-px left-1/2 h-1 w-2 -translate-x-1/2 rounded-full bg-[#9a929f]" />}
      <span className="relative">{children}</span>
    </button>
  );
}

function Taskbar() {
  return (
    <div className="grid h-[60px] shrink-0 grid-cols-[1fr_auto_1fr] items-center bg-[linear-gradient(to_right,#2c1b30_0%,#221d36_12%,#1a1f4e_25%,#11205f_34%,#122552_42%,#14283f_48%,#1d2033_52%,#2a1c30_57%,#241c2f_75%,#241c30_100%)] text-[15px] text-white">
      <span />
      <div className="flex">
        <TaskButton name="Start">
          <svg viewBox="0 0 30 30" className="size-[30px]">
            <defs>
              <linearGradient id="win" x1="0" y1="0" x2="1" y2="1"><stop offset="0" stopColor="#8fe3ff" /><stop offset="1" stopColor="#0795ff" /></linearGradient>
            </defs>
            <path d="M1 .5h13.500V14H0V1.500zM15.500.5H29.500V14h-14zM0 15.200h14.500V29.500H1zM15.500 15.200h14v14.300h-14z" fill="url(#win)" />
          </svg>
        </TaskButton>
        <TaskButton name="Search">
          <svg viewBox="0 0 28 28" className="size-7">
            <path d="m9 18-7 8" stroke="#d6d6da" strokeWidth="3.500" strokeLinecap="round" />
            <circle cx="16" cy="12" r="10.500" fill="#43546f" stroke="#ececee" strokeWidth="2.600" />
          </svg>
        </TaskButton>
        <TaskButton name="File Explorer">
          <svg viewBox="0 0 30 28" className="h-7 w-[30px]">
            <defs>
              <linearGradient id="fold" x1="0" y1="0" x2="1" y2="1"><stop offset="0" stopColor="#ffdf74" /><stop offset="1" stopColor="#fcb70f" /></linearGradient>
            </defs>
            <path d="M0 2.500A1.500 1.500 0 0 1 1.500 1H9l3 3h8v6H0z" fill="#e0a008" />
            <path d="M0 6h9.500l2.500-2h16.500A1.500 1.500 0 0 1 30 5.500v20A1.500 1.500 0 0 1 28.500 27h-27A1.500 1.500 0 0 1 0 25.500z" fill="url(#fold)" />
            <path d="M5 27v-5a2.500 2.500 0 0 1 2.500-2.500h15A2.500 2.500 0 0 1 25 22v5z" fill="#1283d3" />
            <path d="M8.500 23.500h13" stroke="#0a4d8c" strokeWidth="1.200" />
          </svg>
        </TaskButton>
        <TaskButton name="Visual Studio Code">
          <svg viewBox="0 0 24 24" className="size-[30px]">
            <path d="M23.150 2.587L18.210.21a1.494 1.494 0 0 0-1.705.29l-9.460 8.630-4.120-3.128a.999.999 0 0 0-1.276.057L.327 7.261A1 1 0 0 0 .326 8.740L3.899 12 .326 15.260a1 1 0 0 0 .001 1.479L1.650 17.940a.999.999 0 0 0 1.276.057l4.120-3.128 9.460 8.630a1.492 1.492 0 0 0 1.704.29l4.942-2.377A1.500 1.500 0 0 0 24 20.060V3.939a1.500 1.500 0 0 0-.85-1.352zm-5.146 14.861L10.826 12l7.178-5.448v10.896z" fill="#0a7cc4" />
            <path d="m18 0 5.150 2.587A1.500 1.500 0 0 1 24 3.939V20.060a1.500 1.500 0 0 1-.85 1.350L18 24z" fill="#26a5f0" />
          </svg>
        </TaskButton>
        <TaskButton name="PowerShell">
          <svg viewBox="0 0 28 22" className="h-[22px] w-7">
            <path d="M5.500 0H27a1 1 0 0 1 1 1.200L24.500 21a1.200 1.200 0 0 1-1.200 1H1a1 1 0 0 1-1-1.200L3.800 1.300A1.600 1.600 0 0 1 5.500 0z" fill="#4a7ddb" />
            <path d="m9 3.500 8 7-10.500 8M14.500 18h6" fill="none" stroke="#fff" strokeWidth="2.300" />
          </svg>
        </TaskButton>
        <TaskButton name="Android Studio" state="active">
          <svg viewBox="0 0 28 28" className="size-7">
            <circle cx="14" cy="14" r="14" fill="#fff" />
            <path d="M7.500 8.500h13V18L14 21l-6.500-3z" fill="#4285f4" />
            <path d="M9 9a5 3.800 0 0 1 10 0zM9.500 6l-.8-1M18.500 6l.8-1" fill="#3ddc84" stroke="#3ddc84" strokeWidth=".8" />
            <path d="m9.500 21.500 5.500-10 3 7M13 18.500h4M20 11v11" fill="none" stroke="#0b2a45" strokeWidth="1.800" />
          </svg>
        </TaskButton>
        <TaskButton name="Spotify" state="open">
          <span className="grid size-7 place-items-center rounded-full bg-black">
            <FaSpotify className="size-[29px] text-[#1ed760]" />
          </span>
        </TaskButton>
        <TaskButton name="Google Chrome" state="open">
          <svg viewBox="0 0 36 36" className="ml-1 size-9">
            <path d="M16 19 3.900 12A14 14 0 0 1 28.100 12z" fill="#ea4335" />
            <path d="M16 19V12h12.100A14 14 0 0 1 16 33l6-10.500z" fill="#fbbc05" />
            <path d="m16 19 6 3.500L16 33A14 14 0 0 1 3.900 12L10 22.500z" fill="#34a853" />
            <circle cx="16" cy="19" r="7" fill="#fff" />
            <circle cx="16" cy="19" r="5.500" fill="#4285f4" />
            <circle cx="26" cy="9.500" r="9.500" fill="#1b1510" />
            <path d="M17 8a9.500 9.500 0 0 1 5-6.500l1 6zM29 .6a9.500 9.500 0 0 1 6.300 8L31 7z" fill="#b59a72" />
            <circle cx="26" cy="6" r="3" fill="#8a5f48" />
            <path d="M24 8h4l1 4h-6z" fill="#5d4236" />
          </svg>
        </TaskButton>
      </div>
      <div className="flex items-center justify-end pr-6 leading-5">
        <button type="button" aria-label="Show hidden icons">
          <svg viewBox="0 0 16 9" className="h-[9px] w-4"><path d="m.8 8.200 7.200-7 7.200 7" fill="none" stroke="#fff" strokeWidth="1.300" /></svg>
        </button>
        <button type="button" className="ml-5 text-center">ENG<br />IN</button>
        <button type="button" aria-label="Network, sound and battery" className="ml-[22px] flex items-center gap-[10px]">
          <svg viewBox="0 0 20 16" className="h-4 w-5" fill="none" stroke="#fff" strokeWidth="1.500">
            <path d="M.8 6a13 13 0 0 1 18.400 0M3.500 9a9 9 0 0 1 13 0M6.300 11.800a5.200 5.200 0 0 1 7.400 0" />
            <circle cx="10" cy="14" r="1.300" fill="#fff" />
          </svg>
          <svg viewBox="0 0 20 16" className="h-4 w-5" fill="none" stroke="#fff" strokeWidth="1.400">
            <path d="M.8 5.500h3.500L9 1.500v13l-4.700-4H.8zM11.500 5.500a4 4 0 0 1 0 5" />
            <path d="M14 3.500a7 7 0 0 1 0 9M16.500 1.500a10 10 0 0 1 0 13" stroke="#6d6675" />
          </svg>
          <svg viewBox="0 0 20 16" className="h-4 w-5">
            <path d="M6 4h10a1.500 1.500 0 0 1 1.500 1.500v7A1.500 1.500 0 0 1 16 14H6.500A1.500 1.500 0 0 1 5 12.500V9" fill="none" stroke="#fff" strokeWidth="1.400" />
            <path d="M8 6h8v6.500H7V9zM18 7.500h2v3h-2zM0 3h6v3a2 2 0 0 1-2 2.500V13H2.500V8.500A2 2 0 0 1 0 6zM1 0h1.300v3H1zM4 0h1.300v3H4z" fill="#fff" />
          </svg>
        </button>
        <button type="button" className="ml-[18px] text-right">18:45<br />30-08-2022</button>
        <button type="button" aria-label="2 notifications" className="ml-[10px] grid size-5 place-items-center rounded-full bg-[#0a90ff] text-sm leading-none text-[#14202e]">2</button>
      </div>
    </div>
  );
}

export default function App() {
  return (
    <div className="flex h-screen flex-col overflow-hidden bg-[#f2f2f2] font-['Open_Sans','Noto_Sans',sans-serif] text-sm text-black">
      <TitleBar />
      <NavBar />
      <div className="flex min-h-0 flex-1 border-b border-[#c9c9c9]">
        <LeftStripe />
        <Gutter />
        <EmulatorPanel />
        <RightStripe />
      </div>
      <ToolWindowBar />
      <StatusBar />
      <Taskbar />
    </div>
  );
}
